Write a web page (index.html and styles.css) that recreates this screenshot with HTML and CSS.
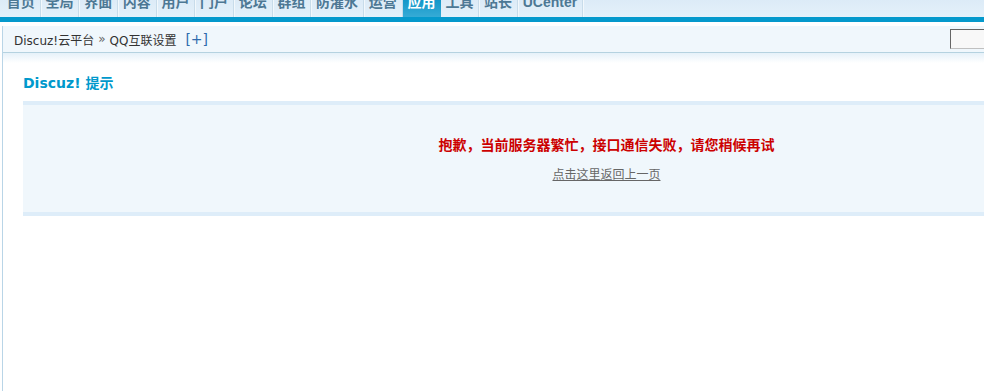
FILE: index.html
```html
<!DOCTYPE html>
<html lang="zh-CN">
<head>
  <meta charset="UTF-8">
  <title>Discuz! 提示</title>
  <link rel="stylesheet" href="styles.css">
</head>
<body>
  <div class="topnav">
    <ul>
      <li><a href="#">首页</a></li>
      <li><a href="#">全局</a></li>
      <li><a href="#">界面</a></li>
      <li><a href="#">内容</a></li>
      <li><a href="#">用户</a></li>
      <li><a href="#">门户</a></li>
      <li><a href="#">论坛</a></li>
      <li><a href="#">群组</a></li>
      <li><a href="#">防灌水</a></li>
      <li><a href="#">运营</a></li>
      <li class="active"><a href="#">应用</a></li>
      <li><a href="#">工具</a></li>
      <li><a href="#">站长</a></li>
      <li><a href="#">UCenter</a></li>
    </ul>
  </div>
  <div class="bluebar"></div>

  <div class="main">
    <div class="crumb">
      <span>Discuz!云平台</span>
      <span class="sep">&raquo;</span>
      <span>QQ互联设置</span>
      <a href="#" class="plus">[+]</a>
      <input type="text" class="search">
    </div>
    <div class="crumb-shade"></div>

    <div class="content">
      <h3>Discuz! 提示</h3>
      <div class="infobox">
        <p class="marginbot">抱歉，当前服务器繁忙，接口通信失败，请您稍候再试</p>
        <p><a href="#" class="lightlink">点击这里返回上一页</a></p>
      </div>
    </div>
  </div>
</body>
</html>
```

FILE: styles.css
```css
body {
  margin: 0;
  padding: 0;
  width: 1210px;
  overflow: hidden;
  background-color: #fff;
  font: 12px "DejaVu Sans", "Noto Sans CJK SC", sans-serif;
  color: #333;
}

a {
  color: #333;
}

/* menu atas (terpotong di bagian atas) */
.topnav {
  height: 17px;
  overflow: hidden;
  background: linear-gradient(#dcebf7, #e5f1fa);
}

.topnav ul {
  display: flex;
  list-style: none;
  margin: -6px 0 0 2px;
  padding: 0;
}

.topnav li {
  height: 23px;
  border-right: 1px solid #c8dcea;
  box-shadow: 1px 0 0 #f2f8fc;
}

.topnav li a {
  display: block;
  height: 23px;
  padding: 0 4.83px;
  font: bold 14px/16px "Liberation Sans", "Noto Sans CJK SC", sans-serif;
  color: #4d7894;
  text-decoration: none;
}

.topnav li.active {
  border-right: none;
  box-shadow: none;
  background: linear-gradient(#0890c4, #36abd6);
}

.topnav li.active a {
  color: #fff;
  padding: 0 5px;
}

.bluebar {
  height: 5px;
  background-color: #0599cc;
}

.main {
  min-height: calc(100vh - 22px);
  margin-left: 2px;
  border-left: 1px solid #b9d5e7;
}

.crumb {
  display: flex;
  align-items: center;
  gap: 4px;
  height: 26px;
  margin-top: 4px;
  padding-left: 11px;
  background-color: #f0f7fc;
  border-bottom: 1px solid #b5d2e0;
}

.crumb .sep {
  color: #666;
}

.crumb .plus {
  margin-left: 5px;
  font-size: 14px;
  color: #2f6cad;
  text-decoration: none;
}

.crumb .search {
  margin-left: auto;
  margin-right: 100px;
  width: 160px;
  height: 20px;
  box-sizing: border-box;
  border: 1px solid #c0c0c0;
  border-top-color: #666;
  border-left-color: #666;
  background-color: #f8f8f8;
}

.crumb-shade {
  height: 10px;
  background: linear-gradient(#e6f1f9, #fff);
}

.content {
  padding: 0 20px;
}

.content h3 {
  margin: 10px 0 8px;
  font: bold 14px/20px "DejaVu Sans", "Noto Sans CJK SC", sans-serif;
  color: #0099cc;
}

.infobox {
  background-color: #f0f7fc;
  border-top: 4px solid #deedf9;
  border-bottom: 4px solid #deedf9;
  padding: 30px 0 28px;
  text-align: center;
}

.infobox p {
  margin: 0;
  line-height: 18px;
}

.infobox .marginbot {
  margin-bottom: 11px;
  line-height: 20px;
  font-size: 14px;
  font-weight: bold;
  color: #cc0000;
}

.lightlink {
  color: #666;
  text-decoration: underline;
}
```
